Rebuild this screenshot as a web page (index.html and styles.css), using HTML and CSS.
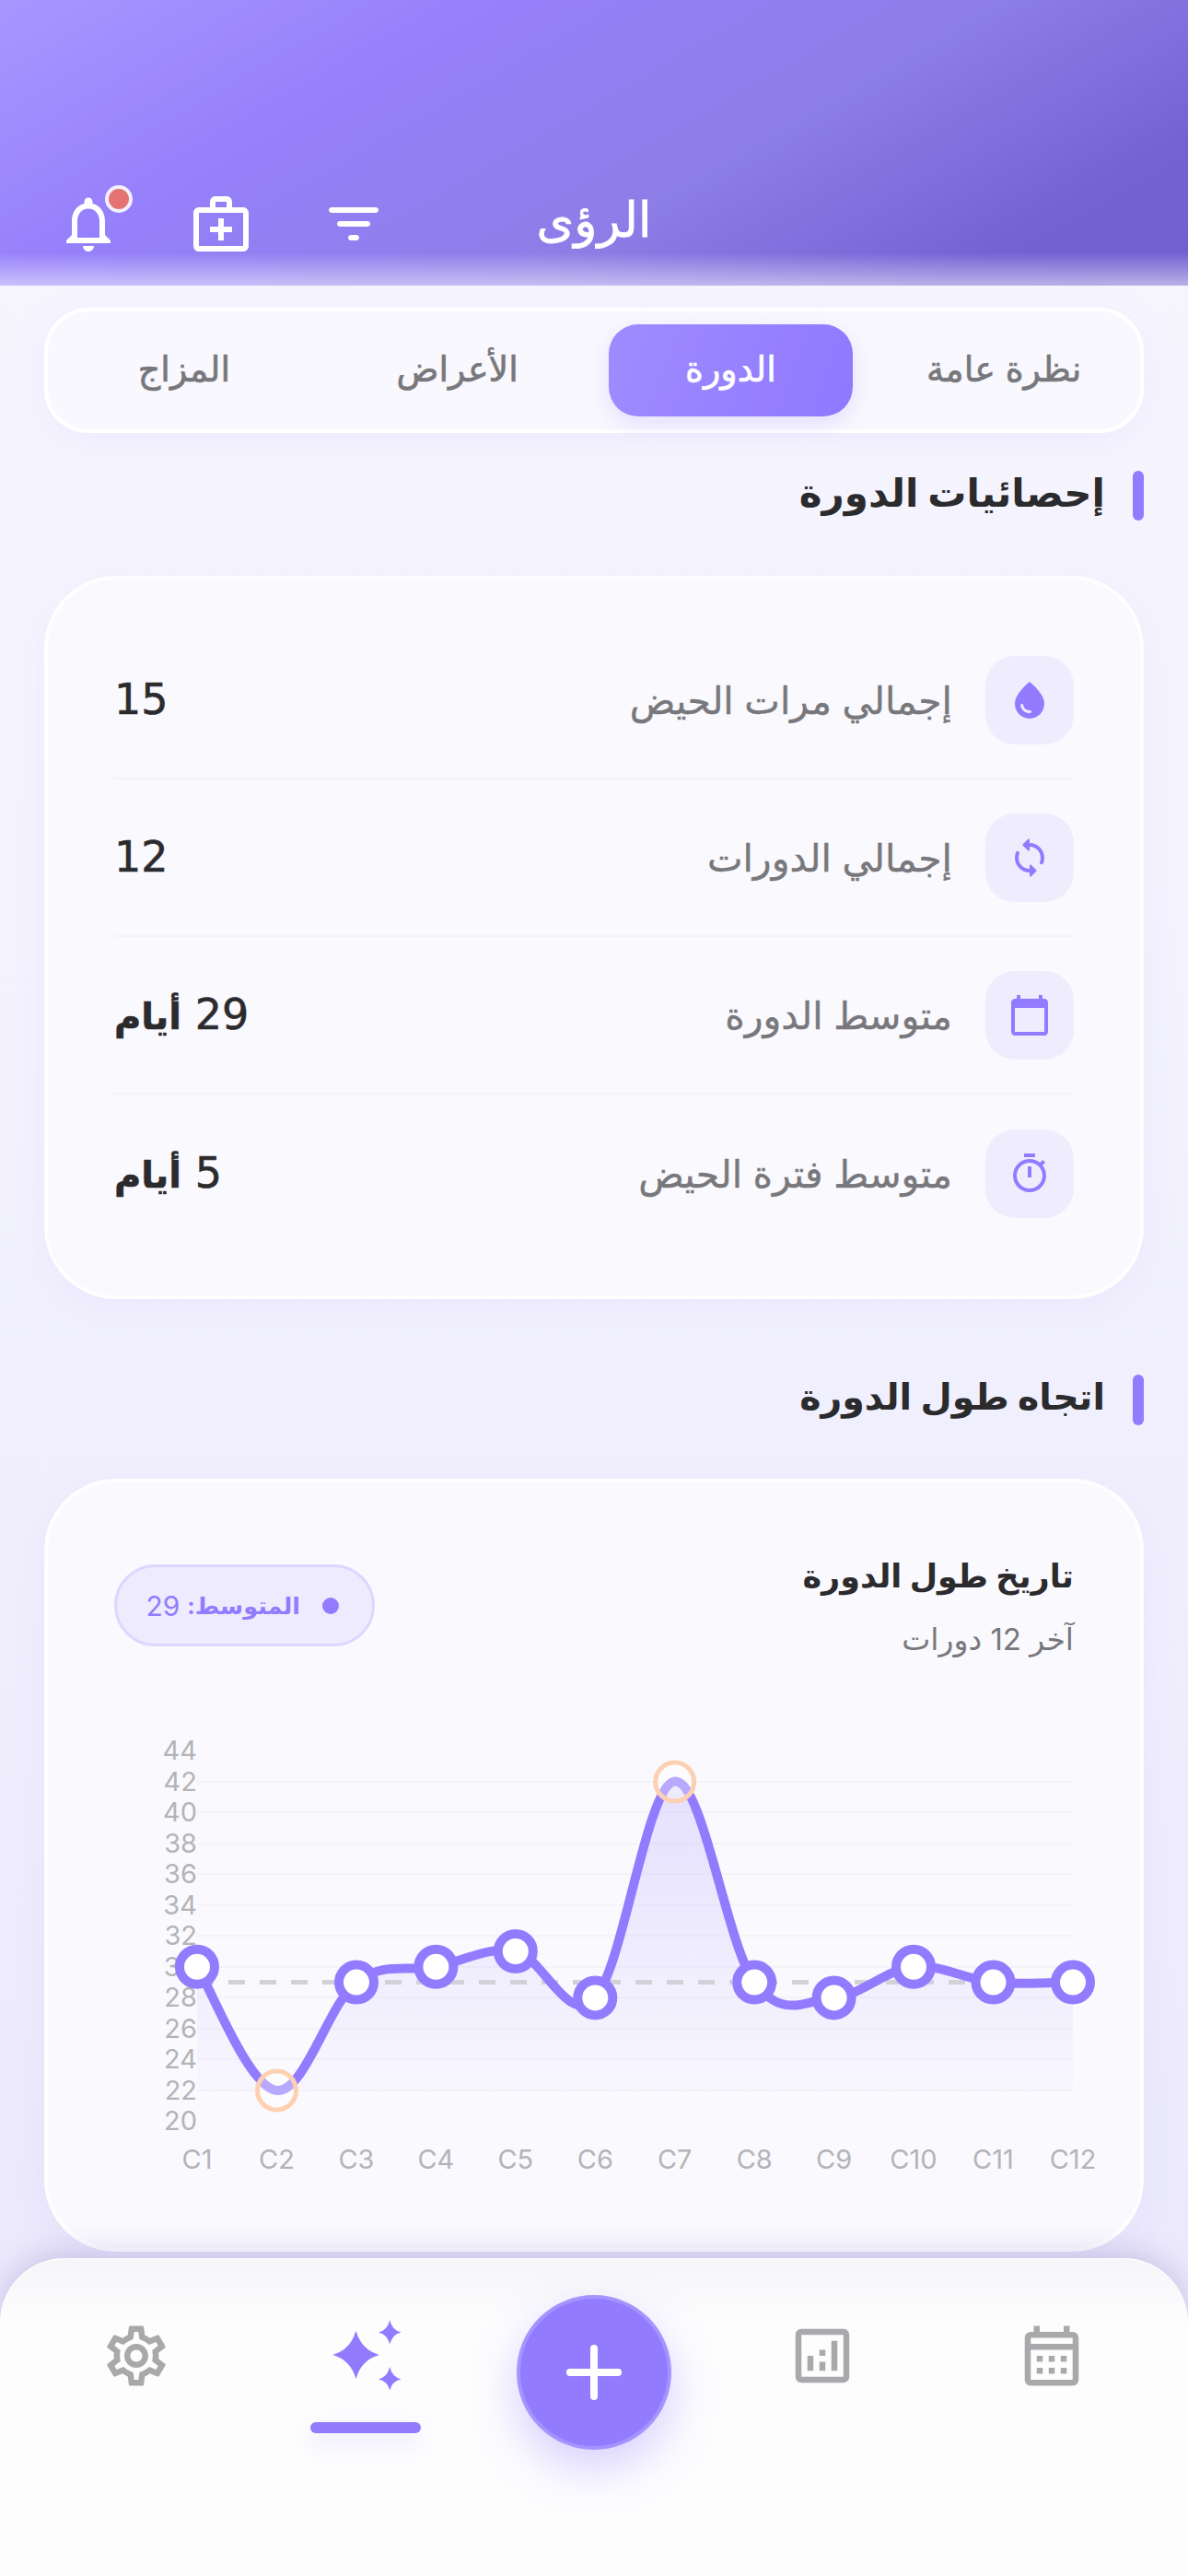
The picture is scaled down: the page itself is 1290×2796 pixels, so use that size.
FILE: index.html
```html
<!DOCTYPE html>
<html lang="ar" dir="rtl">
<head>
    <meta charset="utf-8">
    <title>الرؤى</title>
    <link rel="stylesheet" href="styles.css">
</head>
<body>
    <header class="top-bar">
        <div class="top-icons">
            <span class="bell">
                <svg class="icon-72" viewBox="0 0 24 24"><path d="M12 22c1.1 0 2-.9 2-2h-4c0 1.1.89 2 2 2zm6-6v-5c0-3.07-1.64-5.64-4.5-6.32V4c0-.83-.67-1.5-1.5-1.5s-1.5.67-1.5 1.5v.68C7.63 5.36 6 7.92 6 11v5l-2 2v1h16v-1l-2-2zm-2 1H8v-6c0-2.48 1.51-4.5 4-4.5s4 2.02 4 4.5v6z"/></svg>
                <span class="bell-dot"></span>
            </span>
            <svg class="icon-72" viewBox="0 0 24 24"><path d="M20 6h-4V4c0-1.1-.9-2-2-2h-4c-1.1 0-2 .9-2 2v2H4c-1.1 0-2 .9-2 2v12c0 1.1.9 2 2 2h16c1.1 0 2-.9 2-2V8c0-1.1-.9-2-2-2zM10 4h4v2h-4V4zm10 16H4V8h16v12z"/><path d="M13 10h-2v3H8v2h3v3h2v-3h3v-2h-3z"/></svg>
            <svg class="icon-72" viewBox="0 0 24 24"><path d="M11 18h2c.55 0 1-.45 1-1s-.45-1-1-1h-2c-.55 0-1 .45-1 1s.45 1 1 1zM3 7c0 .55.45 1 1 1h16c.55 0 1-.45 1-1s-.45-1-1-1H4c-.55 0-1 .45-1 1zm4 6h10c.55 0 1-.45 1-1s-.45-1-1-1H7c-.55 0-1 .45-1 1s.45 1 1 1z"/></svg>
        </div>
        <h1 class="page-title">الرؤى</h1>
    </header>

    <nav class="tabs">
        <div class="tab">نظرة عامة</div>
        <div class="tab tab-active">الدورة</div>
        <div class="tab">الأعراض</div>
        <div class="tab">المزاج</div>
    </nav>

    <h2 class="section-title first">إحصائيات الدورة</h2>

    <section class="card stats-card">
        <div class="stat-row">
            <div class="stat-icon"><svg viewBox="0 0 24 24"><path fill-rule="evenodd" d="M12 2c-5.33 4.55-8 8.48-8 11.8 0 4.98 3.8 8.2 8 8.2s8-3.22 8-8.2c0-3.32-2.67-7.25-8-11.8zM7.83 14c.37 0 .67.26.74.62.41 2.22 2.28 2.98 3.64 2.87.43-.02.79.32.79.75 0 .4-.32.73-.72.75-2.13.13-4.62-1.09-5.19-4.12-.08-.45.28-.87.74-.87z"/></svg></div>
            <div class="stat-label">إجمالي مرات الحيض</div>
            <div class="stat-value">15</div>
        </div>
        <div class="stat-row">
            <div class="stat-icon"><svg viewBox="0 0 24 24"><path d="M12 4V2.21c0-.45-.54-.67-.85-.35l-2.8 2.79c-.2.2-.2.51 0 .71l2.79 2.79c.32.31.86.09.86-.36V6c3.31 0 6 2.69 6 6 0 .79-.15 1.56-.44 2.25-.15.36-.04.77.23 1.04.51.51 1.37.33 1.64-.34.37-.91.57-1.91.57-2.95 0-4.42-3.58-8-8-8zm0 14c-3.31 0-6-2.69-6-6 0-.79.15-1.56.44-2.25.15-.36.04-.77-.23-1.04-.51-.51-1.37-.33-1.64.34C4.2 9.96 4 10.96 4 12c0 4.42 3.58 8 8 8v1.79c0 .45.54.67.85.35l2.79-2.79c.2-.2.2-.51 0-.71l-2.79-2.79c-.31-.31-.85-.09-.85.36V18z"/></svg></div>
            <div class="stat-label">إجمالي الدورات</div>
            <div class="stat-value">12</div>
        </div>
        <div class="stat-row">
            <div class="stat-icon"><svg viewBox="0 0 24 24"><path d="M20 3h-1V1h-2v2H7V1H5v2H4c-1.1 0-2 .9-2 2v16c0 1.1.9 2 2 2h16c1.1 0 2-.9 2-2V5c0-1.1-.9-2-2-2zm0 18H4V8h16v13z"/></svg></div>
            <div class="stat-label">متوسط الدورة</div>
            <div class="stat-value">29 <b>أيام</b></div>
        </div>
        <div class="stat-row">
            <div class="stat-icon"><svg viewBox="0 0 24 24"><path d="M15 1H9v2h6V1zm-4 13h2V8h-2v6zm8.03-6.61l1.42-1.42c-.43-.51-.9-.99-1.41-1.41l-1.42 1.42C16.07 4.74 14.12 4 12 4c-4.97 0-9 4.03-9 9s4.02 9 9 9 9-4.03 9-9c0-2.12-.74-4.07-1.97-5.61zM12 20c-3.87 0-7-3.13-7-7s3.13-7 7-7 7 3.13 7 7-3.13 7-7 7z"/></svg></div>
            <div class="stat-label">متوسط فترة الحيض</div>
            <div class="stat-value">5 <b>أيام</b></div>
        </div>
    </section>

    <h2 class="section-title second">اتجاه طول الدورة</h2>

    <section class="card chart-card">
        <div class="chart-head">
            <div>
                <div class="chart-title">تاريخ طول الدورة</div>
                <div class="chart-sub">آخر 12 دورات</div>
            </div>
            <div class="avg-pill"><span class="avg-dot"></span>المتوسط: <span class="avg-num">29</span></div>
        </div>

        <svg class="chart" viewBox="52 1860 1186 520">
            <defs>
                <linearGradient id="areaFill" gradientUnits="userSpaceOnUse" x1="0" y1="1933" x2="0" y2="2275">
                    <stop offset="0" stop-color="#937bff" stop-opacity="0.2"/>
                    <stop offset="1" stop-color="#937bff" stop-opacity="0.02"/>
                </linearGradient>
            </defs>

            <g class="grid-lines">
                <line x1="214" x2="1165" y1="1933" y2="1933"/>
                <line x1="214" x2="1165" y1="1966" y2="1966"/>
                <line x1="214" x2="1165" y1="2000" y2="2000"/>
                <line x1="214" x2="1165" y1="2033" y2="2033"/>
                <line x1="214" x2="1165" y1="2067" y2="2067"/>
                <line x1="214" x2="1165" y1="2100" y2="2100"/>
                <line x1="214" x2="1165" y1="2134" y2="2134"/>
                <line x1="214" x2="1165" y1="2167" y2="2167"/>
                <line x1="214" x2="1165" y1="2201" y2="2201"/>
                <line x1="214" x2="1165" y1="2234" y2="2234"/>
                <line x1="214" x2="1165" y1="2268" y2="2268"/>
            </g>

            <g class="y-labels">
                <text x="214" y="1909">44</text>
                <text x="214" y="1943">42</text>
                <text x="214" y="1976">40</text>
                <text x="214" y="2010">38</text>
                <text x="214" y="2043">36</text>
                <text x="214" y="2077">34</text>
                <text x="214" y="2110">32</text>
                <text x="214" y="2144">30</text>
                <text x="214" y="2177">28</text>
                <text x="214" y="2211">26</text>
                <text x="214" y="2244">24</text>
                <text x="214" y="2278">22</text>
                <text x="214" y="2311">20</text>
            </g>

            <g class="x-labels">
                <text x="214" y="2353">C1</text>
                <text x="300.5" y="2353">C2</text>
                <text x="387" y="2353">C3</text>
                <text x="473.4" y="2353">C4</text>
                <text x="559.8" y="2353">C5</text>
                <text x="646.3" y="2353">C6</text>
                <text x="732.7" y="2353">C7</text>
                <text x="819.2" y="2353">C8</text>
                <text x="905.6" y="2353">C9</text>
                <text x="992" y="2353">C10</text>
                <text x="1078.5" y="2353">C11</text>
                <text x="1165" y="2353">C12</text>
            </g>

            <path class="area" d="M214 2133.8C229.1 2157.3 270.2 2265.1 300.5 2268C330.8 2270.9 356.7 2174.1 387 2150.6C417.3 2127.1 443.1 2139.7 473.4 2133.8C503.7 2127.9 529.5 2111.1 559.8 2117C590.1 2122.9 616 2199.7 646.3 2167.4C676.6 2135.1 702.4 1935.5 732.7 1932.6C763 1929.7 788.9 2109.5 819.2 2150.6C849.5 2191.7 875.3 2170.3 905.6 2167.4C935.9 2164.5 961.7 2136.7 992 2133.8C1022.3 2130.9 1048.2 2147.7 1078.5 2150.6C1108.8 2153.5 1149.9 2150.6 1165 2150.6L1165 2268L214 2268Z"/>
            <line class="avg-line" x1="214" x2="1165" y1="2150.6" y2="2150.6"/>
            <path class="trend" d="M214 2133.8C229.1 2157.3 270.2 2265.1 300.5 2268C330.8 2270.9 356.7 2174.1 387 2150.6C417.3 2127.1 443.1 2139.7 473.4 2133.8C503.7 2127.9 529.5 2111.1 559.8 2117C590.1 2122.9 616 2199.7 646.3 2167.4C676.6 2135.1 702.4 1935.5 732.7 1932.6C763 1929.7 788.9 2109.5 819.2 2150.6C849.5 2191.7 875.3 2170.3 905.6 2167.4C935.9 2164.5 961.7 2136.7 992 2133.8C1022.3 2130.9 1048.2 2147.7 1078.5 2150.6C1108.8 2153.5 1149.9 2150.6 1165 2150.6"/>

            <g class="points">
                <circle cx="214" cy="2133.8" r="19"/>
                <circle cx="387" cy="2150.6" r="19"/>
                <circle cx="473.4" cy="2133.8" r="19"/>
                <circle cx="559.8" cy="2117" r="19"/>
                <circle cx="646.3" cy="2167.4" r="19"/>
                <circle cx="819.2" cy="2150.6" r="19"/>
                <circle cx="905.6" cy="2167.4" r="19"/>
                <circle cx="992" cy="2133.8" r="19"/>
                <circle cx="1078.5" cy="2150.6" r="19"/>
                <circle cx="1165" cy="2150.6" r="19"/>
            </g>
            <g class="extremes">
                <circle cx="300.5" cy="2268" r="21"/>
                <circle cx="732.7" cy="1933" r="21"/>
            </g>
        </svg>
    </section>

    <footer class="bottom-nav">
        <div class="nav-item"><svg class="icon-78" viewBox="0 0 24 24"><path d="M19 4h-1V2h-2v2H8V2H6v2H5c-1.1 0-2 .9-2 2v14c0 1.1.9 2 2 2h14c1.1 0 2-.9 2-2V6c0-1.1-.9-2-2-2zm0 16H5V10h14v10zm0-12H5V6h14v2zM9 14H7v-2h2v2zm4 0h-2v-2h2v2zm4 0h-2v-2h2v2zm-8 4H7v-2h2v2zm4 0h-2v-2h2v2zm4 0h-2v-2h2v2z"/></svg></div>
        <div class="nav-item"><svg class="icon-78" viewBox="0 0 24 24"><path d="M19 3H5c-1.1 0-2 .9-2 2v14c0 1.1.9 2 2 2h14c1.1 0 2-.9 2-2V5c0-1.1-.9-2-2-2zm0 16H5V5h14v14z"/><path d="M7 12h2v5H7zM15 7h2v10h-2zM11 14h2v3h-2zM11 10h2v2h-2z"/></svg></div>
        <div class="nav-item"><div class="add-btn"><svg viewBox="0 0 60 60"><path d="M30 4v52M4 30h52"/></svg></div></div>
        <div class="nav-item nav-active">
            <svg class="icon-84" viewBox="0 0 24 24"><path d="M9 4.5Q10.6 10.4 16.2 12Q10.6 13.6 9 19.5Q7.4 13.6 1.8 12Q7.4 10.4 9 4.5ZM19.5 1.2Q20.2 4.3 23 5Q20.2 5.7 19.5 8.8Q18.8 5.7 16 5Q18.8 4.3 19.5 1.2ZM19.5 15.7Q20.2 18.8 23 19.5Q20.2 20.2 19.5 23Q18.8 20.2 16 19.5Q18.8 18.8 19.5 15.7Z"/></svg>
            <span class="nav-line"></span>
        </div>
        <div class="nav-item"><svg class="icon-78" viewBox="0 0 24 24"><path d="M19.43 12.98c.04-.32.07-.64.07-.98 0-.34-.03-.66-.07-.98l2.11-1.65c.19-.15.24-.42.12-.64l-2-3.46c-.09-.16-.26-.25-.44-.25-.06 0-.12.01-.17.03l-2.49 1c-.52-.4-1.08-.73-1.69-.98l-.38-2.65C14.46 2.18 14.25 2 14 2h-4c-.25 0-.46.18-.49.42l-.38 2.65c-.61.25-1.17.59-1.69.98l-2.49-1c-.06-.02-.12-.03-.18-.03-.17 0-.34.09-.43.25l-2 3.46c-.13.22-.07.49.12.64l2.11 1.65c-.04.32-.07.65-.07.98 0 .33.03.66.07.98l-2.11 1.65c-.19.15-.24.42-.12.64l2 3.46c.09.16.26.25.44.25.06 0 .12-.01.17-.03l2.49-1c.52.4 1.08.73 1.69.98l.38 2.65c.03.24.24.42.49.42h4c.25 0 .46-.18.49-.42l.38-2.65c.61-.25 1.17-.59 1.69-.98l2.49 1c.06.02.12.03.18.03.17 0 .34-.09.43-.25l2-3.46c.12-.22.07-.49-.12-.64l-2.11-1.65zm-1.98-1.71c.04.31.05.52.05.73 0 .21-.02.43-.05.73l-.14 1.13.89.7 1.08.84-.7 1.21-1.27-.51-1.04-.42-.9.68c-.43.32-.84.56-1.25.73l-1.06.43-.16 1.13-.2 1.35h-1.4l-.19-1.35-.16-1.13-1.06-.43c-.43-.18-.83-.41-1.23-.71l-.91-.7-1.06.43-1.27.51-.7-1.21 1.08-.84.89-.7-.14-1.13c-.03-.31-.05-.54-.05-.74s.02-.43.05-.73l.14-1.13-.89-.7-1.08-.84.7-1.21 1.27.51 1.04.42.9-.68c.43-.32.84-.56 1.25-.73l1.06-.43.16-1.13.2-1.35h1.39l.19 1.35.16 1.13 1.06.43c.43.18.83.41 1.23.71l.91.7 1.06-.43 1.27-.51.7 1.21-1.07.85-.89.7.14 1.13zM12 8c-2.21 0-4 1.79-4 4s1.79 4 4 4 4-1.79 4-4-1.79-4-4-4zm0 6c-1.1 0-2-.9-2-2s.9-2 2-2 2 .9 2 2-.9 2-2 2z"/></svg></div>
    </footer>
</body>
</html>
```

FILE: styles.css
```css
* {
    box-sizing: border-box;
}

html, body {
    margin: 0;
    padding: 0;
}

body {
    width: 1290px;
    height: 2796px;
    overflow: hidden;
    font-family: "Inter", "DejaVu Sans", sans-serif;
    color: #2b2b2e;
    background: linear-gradient(180deg, #f7f6fe 0%, #f3f2fe 40%, #e9e7fb 100%);
}

/* header */
.top-bar {
    position: relative;
    height: 310px;
    padding: 207px 0 0 60px;
    direction: ltr;
    display: flex;
    align-items: flex-start;
    background: linear-gradient(150deg, #a897ff 0%, #9680fb 29%, #8d7de6 60%, #7462d3 85%, #7260d0 100%);
}

.top-bar::after {
    content: "";
    position: absolute;
    left: 0;
    right: 0;
    bottom: 0;
    height: 36px;
    background: linear-gradient(180deg, rgba(255, 255, 255, 0), rgba(255, 255, 255, 0.5));
}

.top-icons {
    display: flex;
    gap: 72px;
}

.icon-72 {
    display: block;
    width: 72px;
    height: 72px;
    fill: #fff;
}

.bell {
    position: relative;
    display: block;
    width: 72px;
    height: 72px;
}

.bell-dot {
    position: absolute;
    left: 54px;
    top: -6px;
    width: 30px;
    height: 30px;
    border-radius: 50%;
    background: #e57373;
    border: 4px solid #f3effd;
}

.page-title {
    position: absolute;
    left: 0;
    right: 0;
    top: 207px;
    margin: 0;
    text-align: center;
    font-size: 52px;
    line-height: 64px;
    font-weight: 400;
    -webkit-text-stroke: 0.8px #fff;
    color: #fff;
}

/* tabs */
.tabs {
    margin: 24px 48px 0;
    height: 136px;
    padding: 14px 15px;
    display: grid;
    grid-template-columns: repeat(4, 1fr);
    gap: 31px;
    border: 4px solid #fff;
    border-radius: 48px;
    background: rgba(255, 255, 255, 0.35);
    box-shadow: 0 8px 40px rgba(147, 123, 255, 0.08);
}

.tab {
    display: flex;
    align-items: center;
    justify-content: center;
    padding-bottom: 4px;
    font-size: 38px;
    -webkit-text-stroke: 0.7px #78787c;
    color: #78787c;
}

.tab-active {
    color: #fff;
    -webkit-text-stroke: 0.7px #fff;
    border-radius: 32px;
    background: linear-gradient(110deg, #a08cff, #8f78ff);
    box-shadow: 0 8px 24px rgba(147, 123, 255, 0.2);
}

/* section titles */
.section-title {
    margin: 0 48px 0;
    height: 54px;
    padding: 0 12px 8px 0;
    display: flex;
    align-items: center;
    font-size: 42px;
    font-weight: 700;
    color: #2b2b2e;
}

.section-title::before {
    content: "";
    align-self: flex-start;
    width: 12px;
    height: 54px;
    margin: 0 -12px 0 30px;
    border-radius: 6px;
    background: #937bff;
}

.section-title.first {
    margin-top: 41px;
}

.section-title.second {
    margin-top: 82px;
    height: 55px;
    font-size: 39.5px;
}

.section-title.second::before {
    height: 55px;
}

/* cards */
.card {
    margin: 0 48px;
    border: 4px solid rgba(255, 255, 255, 0.8);
    border-radius: 78px;
    background: #faf9fe;
    box-shadow: 0 10px 40px rgba(120, 105, 230, 0.05);
}

.stats-card {
    margin-top: 60px;
    height: 785px;
    padding: 46px 72px 0;
}

.stat-row {
    height: 171px;
    display: flex;
    align-items: center;
    border-bottom: 2px solid #f4f3f8;
}

.stat-row:last-child {
    border-bottom: none;
}

.stat-icon {
    width: 96px;
    height: 96px;
    border-radius: 32px;
    background: #efecfe;
    display: flex;
    align-items: center;
    justify-content: center;
    flex-shrink: 0;
}

.stat-icon svg {
    width: 48px;
    height: 48px;
    fill: #937bff;
}

.stat-label {
    flex: 1;
    margin-right: 36px;
    font-size: 41px;
    -webkit-text-stroke: 0.4px #78787c;
    color: #78787c;
}

.stat-value {
    font-family: "DejaVu Sans", sans-serif;
    font-size: 46px;
    margin-top: -2px;
    -webkit-text-stroke: 0.6px #2b2b2e;
    color: #2b2b2e;
}

.stat-value b {
    font-size: 40px;
}

.chart-card {
    margin-top: 58px;
    height: 839px;
    padding-top: 76px;
}

.chart-head {
    height: 106px;
    padding: 0 72px;
    display: flex;
    align-items: flex-start;
    justify-content: space-between;
}

.chart-title {
    font-size: 35px;
    font-weight: 700;
    line-height: 50px;
}

.chart-sub {
    margin-top: 24px;
    font-size: 33px;
    line-height: 40px;
    color: #78787c;
}

.avg-pill {
    width: 283px;
    height: 89px;
    margin-top: 13px;
    padding: 0 36px 0 0;
    display: flex;
    align-items: center;
    font-size: 25.5px;
    font-weight: 700;
    color: #937bff;
    background: #efebfe;
    border: 3px solid #ddd6fe;
    border-radius: 45px;
}

.avg-dot {
    width: 18px;
    height: 18px;
    margin-left: 24px;
    border-radius: 50%;
    background: #937bff;
}

.avg-num {
    margin-right: 8px;
    font-size: 30px;
    font-weight: 400;
}

.chart {
    display: block;
    width: 1186px;
    height: 520px;
    margin-top: 70px;
    direction: ltr;
}

.grid-lines line {
    stroke: rgba(0, 0, 0, 0.025);
    stroke-width: 2;
}

.y-labels text,
.x-labels text {
    font-family: "Inter", sans-serif;
    font-size: 29px;
    fill: #b4b4b6;
}

.y-labels text {
    text-anchor: end;
}

.x-labels text {
    text-anchor: middle;
}

.area {
    fill: url(#areaFill);
}

.avg-line {
    stroke: #d2d1d8;
    stroke-width: 5;
    stroke-dasharray: 18 16;
}

.trend {
    fill: none;
    stroke: #937bff;
    stroke-width: 10;
    stroke-linecap: round;
}

.points circle {
    fill: #fff;
    stroke: #937bff;
    stroke-width: 10;
}

.extremes circle {
    fill: rgba(255, 255, 255, 0.35);
    stroke: #fdd0b2;
    stroke-width: 5;
}

/* bottom nav */
.bottom-nav {
    position: relative;
    margin-top: 7px;
    height: 345px;
    padding: 0 24px;
    display: grid;
    grid-template-columns: repeat(5, 1fr);
    align-items: start;
    border-top: 2px solid #fbfbfd;
    border-radius: 70px 70px 0 0;
    background: linear-gradient(180deg, #f6f6f9 0, #fdfdfe 70px);
    box-shadow: 0 -6px 30px rgba(80, 70, 160, 0.22);
}

.nav-item {
    display: flex;
    flex-direction: column;
    align-items: center;
    padding-top: 65px;
}

.icon-78 {
    width: 78px;
    height: 78px;
    fill: #a9a9ab;
}

.icon-84 {
    width: 84px;
    height: 84px;
    margin-top: -4px;
    fill: #937bff;
}

.nav-line {
    width: 120px;
    height: 12px;
    margin-top: 31px;
    border-radius: 6px;
    background: #937bff;
    box-shadow: 0 10px 24px rgba(147, 123, 255, 0.2);
}

.add-btn {
    width: 168px;
    height: 168px;
    margin-top: -27px;
    border-radius: 50%;
    border: 4px solid #a594ff;
    background: #937bff;
    box-shadow: 0 20px 50px rgba(147, 123, 255, 0.35);
    display: flex;
    align-items: center;
    justify-content: center;
}

.add-btn svg {
    width: 60px;
    height: 60px;
    fill: none;
    stroke: #fff;
    stroke-width: 8;
    stroke-linecap: round;
}
```
